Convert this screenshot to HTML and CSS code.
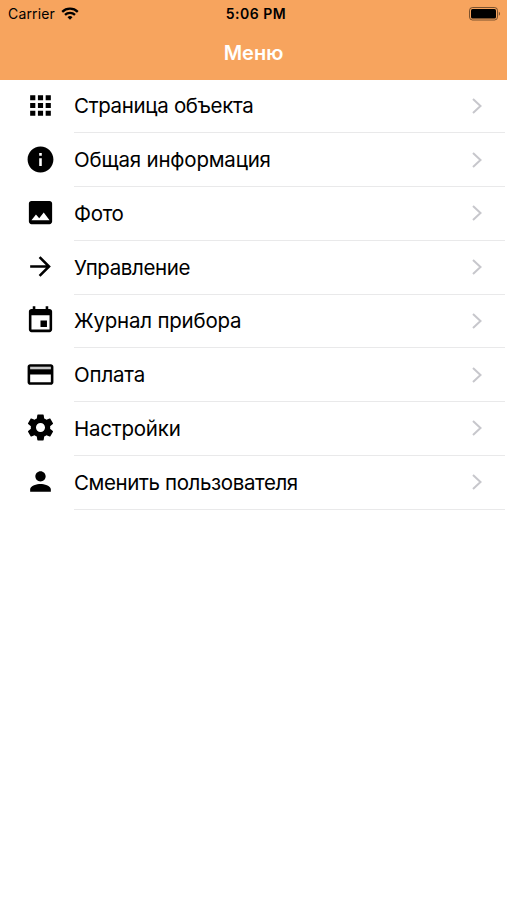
FILE: index.html
```html
<!DOCTYPE html>
<html lang="ru">
<head>
<meta charset="utf-8">
<title>Меню</title>
<link rel="stylesheet" href="styles.css">
</head>
<body>
<header class="header">
  <div class="status">
    <div class="carrier"><span class="carrier-name">Carrier</span>
      <svg class="wifi" viewBox="0 0 18 13"><path d="M1.200 4.800a11.200 11.200 0 0 1 15.600 0M4 7.900a7.200 7.200 0 0 1 10 0" fill="none" stroke="#000" stroke-width="2.300"/><path d="M9 12.800l-2.500-2.600a3.700 3.700 0 0 1 5 0z"/></svg>
    </div>
    <time class="time">5:06 PM</time>
    <svg class="battery" viewBox="0 0 32 14"><rect x=".5" y=".5" width="28" height="12.500" rx="3" fill="none" stroke="#000" stroke-opacity=".5"/><rect x="2" y="2" width="25" height="9.500" rx="1.500"/><path d="M29.800 4.700c1.700.7 1.700 3.400 0 4.100z" fill-opacity=".5"/></svg>
  </div>
  <h1 class="title">Меню</h1>
</header>
<nav class="menu">
  <a class="item"><svg class="icon" viewBox="0 0 24 24"><path d="M4 8h4V4H4v4zm6 12h4v-4h-4v4zm-6 0h4v-4H4v4zm0-6h4v-4H4v4zm6 0h4v-4h-4v4zm6-10v4h4V4h-4zm-6 4h4V4h-4v4zm6 6h4v-4h-4v4zm0 6h4v-4h-4v4z"/></svg><span class="row"><span class="label l1">Страница объекта</span><svg class="chevron" viewBox="0 0 12 18"><path d="M2 2l7.500 7L2 16"/></svg></span></a>
  <a class="item"><svg class="icon" viewBox="0 0 24 24"><path d="M12 2C6.480 2 2 6.480 2 12s4.480 10 10 10 10-4.480 10-10S17.520 2 12 2zm1 15h-2v-6h2v6zm0-8h-2V7h2v2z"/></svg><span class="row"><span class="label l2">Общая информация</span><svg class="chevron" viewBox="0 0 12 18"><path d="M2 2l7.500 7L2 16"/></svg></span></a>
  <a class="item"><svg class="icon" viewBox="0 0 24 24"><path d="M21 19V5c0-1.100-.9-2-2-2H5c-1.100 0-2 .9-2 2v14c0 1.100.9 2 2 2h14c1.100 0 2-.9 2-2zM8.500 13.500l2.500 3.010L14.500 12l4.500 6H5l3.500-4.500z"/></svg><span class="row"><span class="label l3">Фото</span><svg class="chevron" viewBox="0 0 12 18"><path d="M2 2l7.500 7L2 16"/></svg></span></a>
  <a class="item"><svg class="icon" viewBox="0 0 24 24"><path d="M12 4l-1.410 1.410L16.170 11H4v2h12.170l-5.580 5.590L12 20l8-8z"/></svg><span class="row"><span class="label l4">Управление</span><svg class="chevron" viewBox="0 0 12 18"><path d="M2 2l7.500 7L2 16"/></svg></span></a>
  <a class="item"><svg class="icon" viewBox="0 0 24 24"><path d="M17 12h-5v5h5v-5zM16 1v2H8V1H6v2H5c-1.110 0-1.990.9-1.990 2L3 19c0 1.100.890 2 2 2h14c1.100 0 2-.9 2-2V5c0-1.100-.9-2-2-2h-1V1h-2zm3 18H5V8h14v11z"/></svg><span class="row"><span class="label l5">Журнал прибора</span><svg class="chevron" viewBox="0 0 12 18"><path d="M2 2l7.500 7L2 16"/></svg></span></a>
  <a class="item"><svg class="icon" viewBox="0 0 24 24"><path d="M4 6h16v2H4z" fill="#c8c8c8"/><path d="M20 4H4c-1.110 0-1.990.890-1.990 2L2 18c0 1.110.890 2 2 2h16c1.110 0 2-.890 2-2V6c0-1.110-.890-2-2-2zm0 14H4v-6h16v6zm0-10H4V6h16v2z"/></svg><span class="row"><span class="label l6">Оплата</span><svg class="chevron" viewBox="0 0 12 18"><path d="M2 2l7.500 7L2 16"/></svg></span></a>
  <a class="item"><svg class="icon" viewBox="0 0 24 24"><path d="M19.430 12.980c.040-.320.070-.640.070-.980s-.030-.660-.070-.980l2.110-1.650c.190-.150.240-.420.120-.640l-2-3.460c-.120-.220-.390-.300-.610-.220l-2.490 1c-.520-.400-1.080-.730-1.690-.980l-.380-2.650C14.460 2.180 14.250 2 14 2h-4c-.250 0-.460.180-.490.420l-.380 2.650c-.610.250-1.170.590-1.690.980l-2.490-1c-.230-.090-.490 0-.610.220l-2 3.460c-.130.220-.070.490.120.640l2.110 1.650c-.040.320-.070.650-.070.980s.030.660.070.980l-2.110 1.650c-.190.150-.240.420-.120.640l2 3.460c.120.220.390.300.610.220l2.490-1c.520.400 1.080.730 1.690.980l.380 2.650c.030.240.240.420.490.420h4c.250 0 .460-.180.490-.420l.380-2.650c.610-.250 1.170-.590 1.690-.980l2.490 1c.230.090.490 0 .610-.220l2-3.460c.120-.220.070-.490-.120-.640l-2.110-1.650zM12 15.500c-1.930 0-3.500-1.570-3.500-3.500s1.570-3.500 3.500-3.500 3.500 1.570 3.500 3.500-1.570 3.500-3.500 3.500z"/></svg><span class="row"><span class="label l7">Настройки</span><svg class="chevron" viewBox="0 0 12 18"><path d="M2 2l7.500 7L2 16"/></svg></span></a>
  <a class="item"><svg class="icon" viewBox="0 0 24 24"><path d="M12 12c2.210 0 4-1.790 4-4s-1.790-4-4-4-4 1.790-4 4 1.790 4 4 4zm0 2c-2.670 0-8 1.340-8 4v2h16v-2c0-2.660-5.330-4-8-4z"/></svg><span class="row"><span class="label l8">Сменить пользователя</span><svg class="chevron" viewBox="0 0 12 18"><path d="M2 2l7.500 7L2 16"/></svg></span></a>
</nav>
</body>
</html>
```
FILE: styles.css
```css
* { box-sizing: border-box; }
body { margin: 0; min-height: 900px; background: #fff; color: #000; font-family: Inter, "Liberation Sans", sans-serif; }
.header { height: 79.5px; background: #f7a45e; }
.status { height: 27px; display: grid; grid-template-columns: 1fr auto 1fr; align-items: center; padding: 0 6px 0 8px; font-size: 14px; }
.carrier { display: flex; align-items: center; gap: 6px; }
.carrier-name { letter-spacing: .15px; }
.wifi { width: 18px; height: 13px; }
.time { font-weight: 600; font-size: 14px; letter-spacing: .5px; padding-left: 3px; }
.battery { width: 32px; height: 14px; justify-self: end; }
.title { margin: 0; height: 52px; line-height: 52px; text-align: center; color: #fff; font-size: 20px; font-weight: 600; }
.item { display: flex; align-items: center; height: 53.75px; padding: 0 2px 0 25px; }
.icon { width: 31px; height: 31px; flex: none; margin-bottom: 2px; }
.row { display: flex; flex: 1; align-items: center; justify-content: space-between; height: 100%; margin-left: 18px; padding-right: 22px; border-bottom: 1px solid #e9e9ea; }
.label { font-size: 20.5px; white-space: nowrap; }
.l1 { letter-spacing: -.33px; }
.l2 { letter-spacing: -.2px; }
.l3 { letter-spacing: -.3px; }
.l4 { letter-spacing: -.38px; }
.l5 { letter-spacing: -.22px; }
.l6 { letter-spacing: -.17px; }
.l7 { letter-spacing: -.22px; }
.l8 { letter-spacing: -.38px; }
.chevron { width: 12px; height: 18px; fill: none; stroke: #c7c7cc; stroke-width: 2; }
```
